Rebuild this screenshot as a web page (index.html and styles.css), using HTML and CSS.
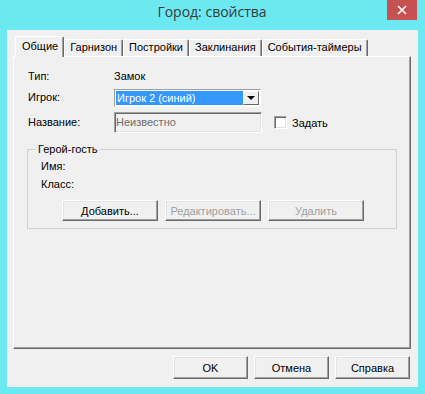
FILE: index.html
```html
<!DOCTYPE html>
<html lang="ru">
<head>
    <meta charset="UTF-8">
    <title>Город: свойства</title>
    <link rel="stylesheet" href="styles.css">
</head>
<body>

    <div class="window">
        <div class="titlebar">
            <span></span>
            <div class="title">Город: свойства</div>
            <div class="close">
                <svg width="10" height="10" viewBox="0 0 10 10">
                    <path d="M1 1 L9 9 M9 1 L1 9" stroke="#fff" stroke-width="1.7" fill="none"/>
                </svg>
            </div>
        </div>

        <div class="client">
            <div class="tabs">
                <div class="tab active">Общие</div>
                <div class="tab">Гарнизон</div>
                <div class="tab">Постройки</div>
                <div class="tab">Заклинания</div>
                <div class="tab">События-таймеры</div>
            </div>

            <div class="panel">
                <div class="form">
                    <div class="label">Тип:</div>
                    <div class="value">Замок</div>
                    <div></div>

                    <div class="label">Игрок:</div>
                    <div class="combo">
                        <div class="combo-text">Игрок 2 (синий)</div>
                        <div class="combo-arrow"></div>
                    </div>
                    <div></div>

                    <div class="label tall">Название:</div>
                    <div class="edit">Неизвестно</div>
                    <label class="check"><span class="box"></span>Задать</label>
                </div>

                <fieldset class="group">
                    <legend>Герой-гость</legend>
                    <div class="glabel first">Имя:</div>
                    <div class="glabel">Класс:</div>
                    <div class="gbuttons">
                        <button class="btn wide">Добавить...</button>
                        <button class="btn wide" disabled>Редактировать...</button>
                        <button class="btn wide" disabled>Удалить</button>
                    </div>
                </fieldset>
            </div>

            <div class="footer">
                <button class="btn">OK</button>
                <button class="btn">Отмена</button>
                <button class="btn">Справка</button>
            </div>
        </div>
    </div>

</body>
</html>
```

FILE: styles.css
```css
body {
    margin: 0;
    font-family: "Liberation Sans", Arial, sans-serif;
    font-size: 11px;
    color: #000;
}

.window {
    width: 425px;
    height: 394px;
    background-color: #6ce8f0;
    display: flex;
    flex-direction: column;
}

.titlebar {
    height: 30px;
    flex: none;
    display: grid;
    grid-template-columns: 1fr auto 1fr;
    padding: 0 8px 0 7px;
    align-items: start;
}

.title {
    font-family: "Open Sans", sans-serif;
    font-size: 14px;
    line-height: 24px;
    color: #3a3a3a;
}

.close {
    justify-self: end;
    width: 30px;
    height: 20px;
    background-color: #c75050;
    display: flex;
    align-items: center;
    justify-content: center;
}

.client {
    flex: 1;
    margin: 0 7px 7px 7px;
    background-color: #f0f0f0;
    padding: 6px 7px 0 6px;
    display: flex;
    flex-direction: column;
}

/* tabs */
.tabs {
    height: 20px;
    display: flex;
    align-items: flex-end;
    padding-left: 2px;
}

.tab {
    box-sizing: border-box;
    height: 17px;
    padding: 0 5px;
    line-height: 15px;
    border-left: 1px solid #fff;
    border-top: 1px solid #fff;
    border-right: 1px solid #696969;
    box-shadow: inset -1px 0 #a0a0a0;
    border-radius: 2px 2px 0 0;
    background-color: #f0f0f0;
}

.tab.active {
    height: 21px;
    line-height: 19px;
    margin-bottom: -1px;
    padding: 0 5px 0 6px;
    position: relative;
}

.panel {
    box-sizing: border-box;
    height: 293px;
    border-left: 1px solid #fff;
    border-top: 1px solid #fff;
    border-right: 1px solid #696969;
    border-bottom: 1px solid #696969;
    box-shadow: inset -1px -1px #a0a0a0;
    padding: 11px 0 0 14px;
}

/* form rows */
.form {
    display: grid;
    grid-template-columns: 86px 148px auto;
    grid-template-rows: 21px 23px 21px;
    align-items: start;
}

.label, .value {
    line-height: 17px;
}

.label.tall {
    line-height: 21px;
}

.combo {
    box-sizing: border-box;
    width: 147px;
    height: 18px;
    border: 1px solid;
    border-color: #a0a0a0 #fff #fff #a0a0a0;
    background-color: #fff;
    display: flex;
    padding: 1px;
}

.combo-text {
    flex: 1;
    background-color: #3399ff;
    color: #fff;
    line-height: 14px;
    padding-left: 1px;
}

.combo-arrow {
    box-sizing: border-box;
    width: 16px;
    border-left: 1px solid #fff;
    border-top: 1px solid #fff;
    border-right: 1px solid #696969;
    border-bottom: 1px solid #696969;
    background-color: #f0f0f0;
    display: flex;
    align-items: center;
    justify-content: center;
}

.combo-arrow::after {
    content: "";
    border-left: 4px solid transparent;
    border-right: 4px solid transparent;
    border-top: 4px solid #000;
}

.edit {
    box-sizing: border-box;
    width: 148px;
    height: 21px;
    border: 1px solid;
    border-color: #a0a0a0 #fff #fff #a0a0a0;
    box-shadow: inset 1px 1px #696969, inset -1px -1px #e3e3e3;
    padding-left: 1px;
    line-height: 19px;
    color: #6d6d6d;
}

.check {
    align-self: center;
    display: flex;
    align-items: center;
    margin-left: 12px;
}

.check .box {
    box-sizing: border-box;
    width: 13px;
    height: 13px;
    margin-right: 5px;
    background-color: #fff;
    border: 1px solid;
    border-color: #a0a0a0 #fff #fff #a0a0a0;
    box-shadow: inset 1px 1px #696969, inset -1px -1px #e3e3e3;
}

/* group box */
.group {
    box-sizing: border-box;
    width: 370px;
    margin: 10px 0 0 -1px;
    padding: 0 0 7px 13px;
    border: 1px solid #d0d0d0;
}

.group legend {
    line-height: 13px;
    padding: 0 2px;
    margin-left: -5px;
}

.glabel {
    line-height: 13px;
    margin-top: 5px;
}

.glabel.first {
    margin-top: 4px;
}

.gbuttons {
    display: flex;
    gap: 7px;
    margin: 9px 0 0 21px;
}

/* buttons */
.btn {
    box-sizing: border-box;
    width: 75px;
    height: 23px;
    padding: 0;
    font-family: inherit;
    font-size: 11px;
    color: #000;
    background-color: #f0f0f0;
    border: 1px solid;
    border-color: #fff #696969 #696969 #fff;
    box-shadow: inset -1px -1px #a0a0a0, inset 1px 1px #e3e3e3;
    border-radius: 0;
}

.btn.wide {
    width: 96px;
    height: 21px;
}

.btn:disabled {
    color: #a0a0a0;
}

.footer {
    display: flex;
    justify-content: flex-end;
    gap: 6px;
    margin-top: 7px;
    padding-right: 1px;
}
```
